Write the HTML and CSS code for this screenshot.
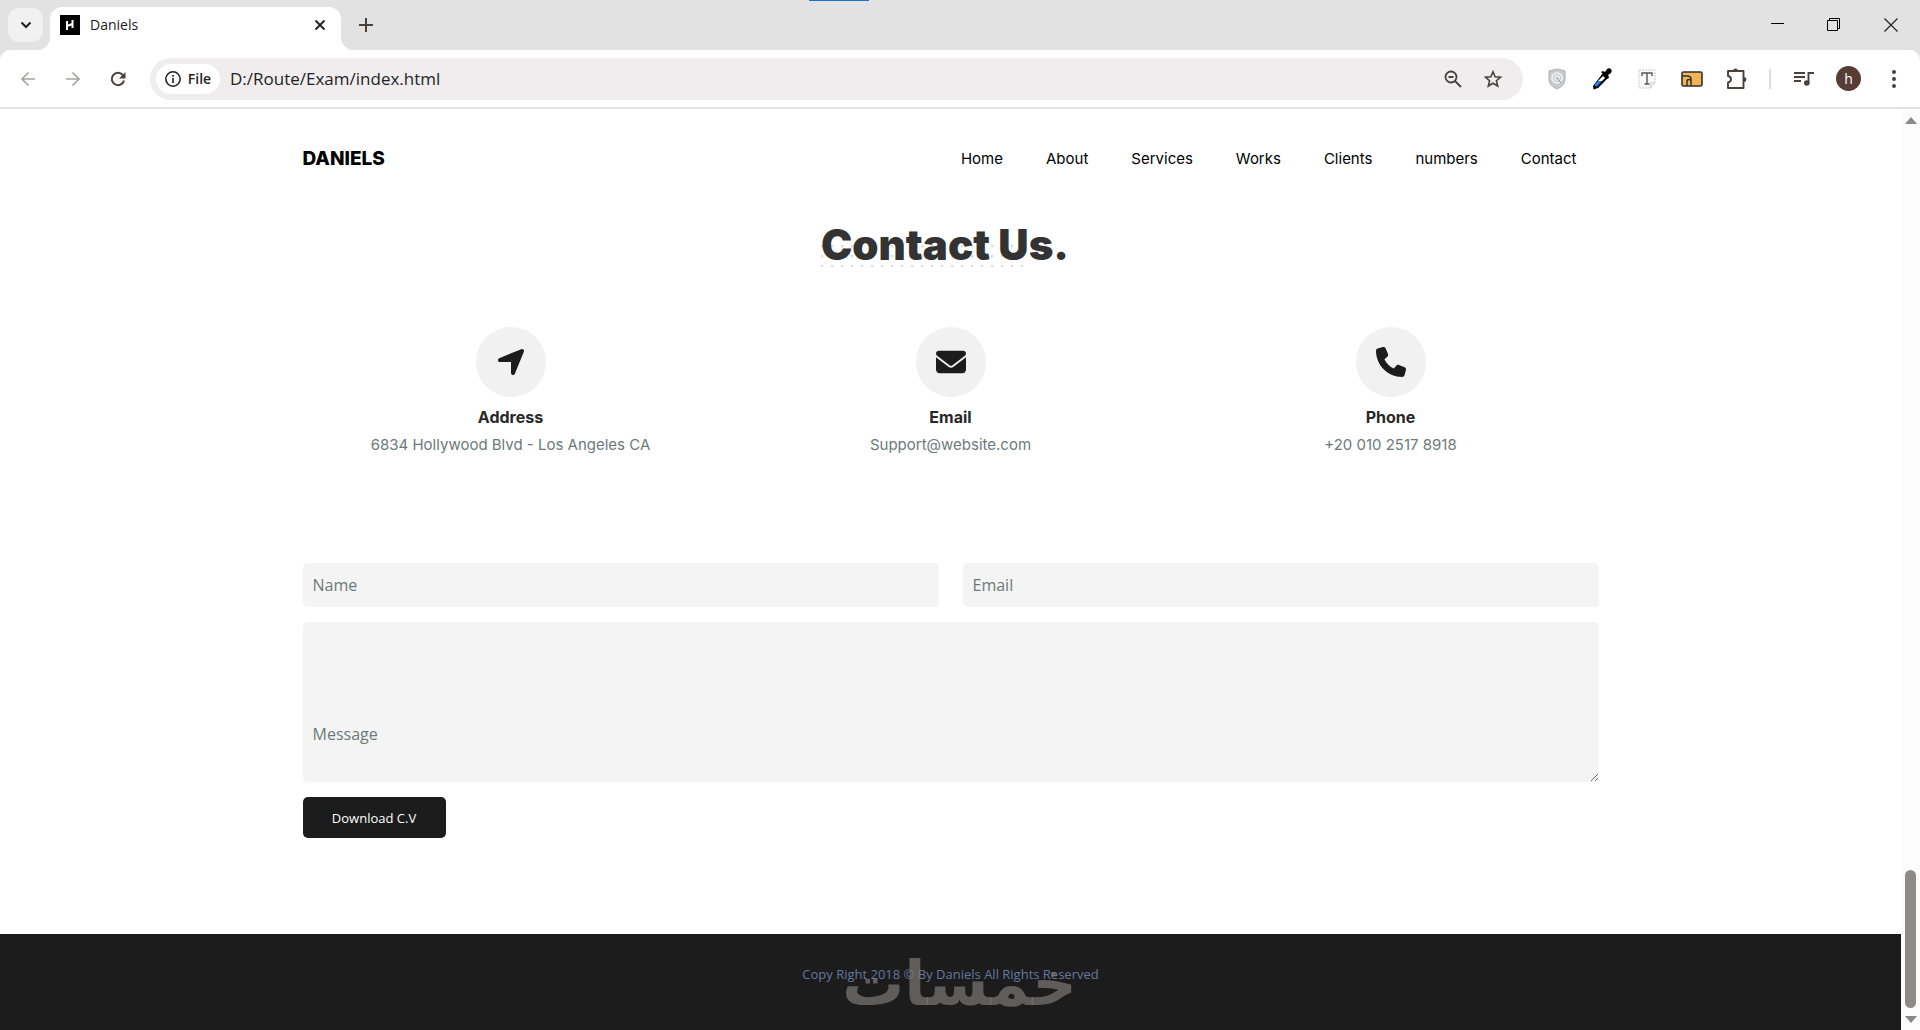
FILE: index.html
```html
<!DOCTYPE html>
<html lang="en">
<head>
    <meta charset="UTF-8">
    <meta name="viewport" content="width=device-width, initial-scale=1.0">
    <title>Daniels</title>
    <link rel="stylesheet" href="styles.css">
</head>
<body>

    <div class="browser">
        <!-- tab strip -->
        <div class="tab-strip">
            <button class="tab-search" aria-label="Search tabs">
                <svg width="12" height="8" viewBox="0 0 12 8"><path d="M1.500 1.500 6 6l4.500-4.500" fill="none" stroke="#1f1f1f" stroke-width="2"/></svg>
            </button>
            <div class="tab">
                <svg class="favicon" width="20" height="20" viewBox="0 0 20 20"><rect width="20" height="20"/><path d="M7 6v9M12.500 5v8M7 11l5.500-2" fill="none" stroke="#fff" stroke-width="2"/></svg>
                <span class="tab-title">Daniels</span>
                <button class="icon-btn tab-close" aria-label="Close tab">
                    <svg width="12" height="12" viewBox="0 0 12 12"><path d="M1.500 1.500l9 9M10.500 1.500l-9 9" stroke="#1f1f1f" stroke-width="1.800"/></svg>
                </button>
            </div>
            <button class="icon-btn new-tab" aria-label="New tab">
                <svg width="14" height="14" viewBox="0 0 14 14"><path d="M7 0v14M0 7h14" stroke="#4a413b" stroke-width="2"/></svg>
            </button>
            <div class="window-buttons">
                <button class="icon-btn" aria-label="Minimize">
                    <svg width="14" height="14" viewBox="0 0 14 14"><path d="M1 5.500h13" stroke="#000"/></svg>
                </button>
                <button class="icon-btn" aria-label="Restore">
                    <svg width="14" height="14" viewBox="0 0 14 14"><path d="M.5 2.500h10v10H.5zM2.500 2V.5h10v10H11" fill="none" stroke="#000"/></svg>
                </button>
                <button class="icon-btn" aria-label="Close">
                    <svg width="14" height="14" viewBox="0 0 14 14"><path d="M.5.5l13 13M13.500.5l-13 13" stroke="#222" stroke-width="1.200"/></svg>
                </button>
            </div>
        </div>

        <!-- toolbar -->
        <div class="toolbar">
            <div class="nav-buttons">
                <button class="icon-btn" aria-label="Back">
                    <svg width="16" height="16" viewBox="0 0 16 16"><path d="M15 8H2M8.500 1.500 2 8l6.500 6.500" fill="none" stroke="#a8a5a3" stroke-width="1.700"/></svg>
                </button>
                <button class="icon-btn" aria-label="Forward">
                    <svg width="16" height="16" viewBox="0 0 16 16"><path d="M1 8h13M7.500 1.500 14 8l-6.500 6.500" fill="none" stroke="#a8a5a3" stroke-width="1.700"/></svg>
                </button>
                <button class="icon-btn" aria-label="Reload">
                    <svg width="16" height="16" viewBox="0 0 16 16"><path d="M14 9.500A6.200 6.200 0 1 1 12.800 4L14.500 6" fill="none" stroke="#4a413b" stroke-width="2"/><path d="M15.500 1v6.500H9z" fill="#4a413b"/></svg>
                </button>
            </div>
            <div class="omnibox">
                <button class="site-chip">
                    <svg width="16" height="16" viewBox="0 0 16 16"><circle cx="8" cy="8" r="7.200" fill="none" stroke="#1f1f1f" stroke-width="1.500"/><path d="M8 7v5M8 4v1.800" stroke="#1f1f1f" stroke-width="1.600"/></svg>
                    File
                </button>
                <input class="url" type="text" aria-label="Address bar" value="D:/Route/Exam/index.html">
                <button class="icon-btn" aria-label="Zoom">
                    <svg width="18" height="18" viewBox="0 0 18 18"><circle cx="7" cy="7" r="5.500" fill="none" stroke="#4a413b" stroke-width="1.800"/><path d="M4.500 7h5M11 11l6 6" stroke="#4a413b" stroke-width="1.800"/></svg>
                </button>
                <button class="icon-btn" aria-label="Bookmark">
                    <svg width="18" height="18" viewBox="0 0 18 18"><path d="M9 1.800l2.100 4.900 5.400.5-4.100 3.500 1.300 5.300L9 13.200 4.300 16l1.300-5.300-4.100-3.500 5.400-.5z" fill="none" stroke="#4a413b" stroke-width="1.600"/></svg>
                </button>
            </div>
            <div class="extensions">
                <button class="icon-btn" aria-label="Shield">
                    <svg width="18" height="22" viewBox="0 0 18 22"><path d="M9 1l8 2v8c0 5-3.500 8-8 10-4.500-2-8-5-8-10V3z" fill="#c8cbcd" stroke="#aaaeb0"/><circle cx="9" cy="10" r="5" fill="none" stroke="#f4f4f4" stroke-width="1.500"/><circle cx="9" cy="10" r="2.200" fill="none" stroke="#f4f4f4" stroke-width="1.200"/><path d="M9 10l4 5" stroke="#8e9396"/></svg>
                </button>
                <button class="icon-btn" aria-label="Color picker">
                    <svg width="20" height="22" viewBox="0 0 20 22"><path d="M11 5l5 5L6 20l-4.500 1.500L1 18z" fill="#000"/><path d="M11 8l2 2-3 3H6z" fill="#fff"/><path d="M6 13h4l-5 5.500H3V16z" fill="#2f7ee0"/><path d="M9 4l2-1 2 1 2-3c3-2 6 1 4 4l-3 2 1 2-1 2z" fill="#000"/></svg>
                </button>
                <button class="icon-btn" aria-label="Text tool">
                    <svg width="18" height="20" viewBox="0 0 18 20"><path d="M1 1h16v13l-4 5H1z" fill="#fafafa" stroke="#c9c9c9" stroke-dasharray="2 1"/><path d="M4 7V4h10v3M9 4v11M6.500 15h5" fill="none" stroke="#555" stroke-width="1.400"/><path d="M17 14h-4v5" fill="none" stroke="#c9c9c9"/></svg>
                </button>
                <button class="icon-btn" aria-label="Folder tool">
                    <svg width="22" height="16" viewBox="0 0 22 16"><rect x="1" y="1" width="20" height="14" rx="1.500" fill="#f3b457" stroke="#33302d" stroke-width="1.600"/><path d="M1 5h5c3 0 4 1 4 3v7M6 15v-5c0-2 4-2 4 0" fill="none" stroke="#33302d" stroke-width="1.500"/></svg>
                </button>
                <button class="icon-btn" aria-label="Extensions">
                    <svg width="22" height="22" viewBox="0 0 22 22"><path d="M2 3h15.500v17H2v-5.500c4-1 4-5.500 0-6.500z" fill="none" stroke="#4a413b" stroke-width="1.900" stroke-linejoin="round"/><path d="M7 3a2.500 2.500 0 0 1 5 0zM18 9a2.500 2.500 0 0 1 0 5z" fill="#4a413b"/></svg>
                </button>
                <span class="divider"></span>
                <button class="icon-btn" aria-label="Media control">
                    <svg width="20" height="16" viewBox="0 0 20 16"><path d="M0 2h11M0 6h11M0 10h7M14.500 12V2H20" fill="none" stroke="#4a413b" stroke-width="1.900"/><circle cx="12.800" cy="12" r="2.800" fill="#4a413b"/></svg>
                </button>
                <button class="avatar" aria-label="Profile">h</button>
                <button class="icon-btn" aria-label="Menu">
                    <svg width="4" height="18" viewBox="0 0 4 18"><g fill="#4a413b"><circle cx="2" cy="2" r="2"/><circle cx="2" cy="9" r="2"/><circle cx="2" cy="16" r="2"/></g></svg>
                </button>
            </div>
        </div>
    </div>

    <div class="viewport">
        <div class="page">
            <header class="container navbar">
                <a class="brand" href="#home">DANIELS</a>
                <nav>
                    <ul class="nav-list">
                        <li><a href="#home">Home</a></li>
                        <li><a href="#about">About</a></li>
                        <li><a href="#services">Services</a></li>
                        <li><a href="#works">Works</a></li>
                        <li><a href="#clients">Clients</a></li>
                        <li><a href="#numbers">numbers</a></li>
                        <li><a href="#contact">Contact</a></li>
                    </ul>
                </nav>
            </header>

            <main class="container contact" id="contact">
                <h1 class="title"><span>Contact Us.</span></h1>

                <div class="info-list">
                    <div class="info">
                        <div class="info-icon">
                            <svg width="28" height="32" viewBox="0 0 448 512"><path d="M429.600 92.100c4.900-11.900 2.100-25.600-7-34.700s-22.800-11.900-34.700-7l-352 144c-14.200 5.800-22.200 20.800-19.300 35.800S32.600 256 48 256H224V432c0 15.300 10.800 28.400 25.800 31.400s30-5.100 35.800-19.300z" fill="#1c1c1c"/></svg>
                        </div>
                        <h2>Address</h2>
                        <p>6834 Hollywood Blvd - Los Angeles CA</p>
                    </div>
                    <div class="info">
                        <div class="info-icon">
                            <svg width="30" height="30" viewBox="0 0 512 512"><path d="M48 64C21.500 64 0 85.500 0 112c0 15.100 7.100 29.300 19.200 38.400l217.600 163.200c11.400 8.500 27 8.500 38.400 0l217.600-163.200c12.100-9.100 19.200-23.300 19.200-38.400 0-26.500-21.500-48-48-48zM0 176v208c0 35.300 28.700 64 64 64h384c35.300 0 64-28.700 64-64V176L294.400 339.200c-22.800 17.100-54 17.100-76.800 0z" fill="#1c1c1c"/></svg>
                        </div>
                        <h2>Email</h2>
                        <p>Support@website.com</p>
                    </div>
                    <div class="info">
                        <div class="info-icon">
                            <svg width="30" height="30" viewBox="0 0 512 512"><path d="M164.900 24.600c-7.700-18.600-28-28.500-47.400-23.200l-88 24C12.100 30.200 0 46 0 64c0 247.400 200.600 448 448 448 18 0 33.800-12.100 38.600-29.500l24-88c5.300-19.400-4.600-39.700-23.200-47.400l-96-40c-16.300-6.800-35.200-2.100-46.300 11.600L304.700 368C234.300 334.700 177.300 277.700 144 207.300l49.300-40.300c13.700-11.200 18.400-30 11.600-46.300z" fill="#1c1c1c"/></svg>
                        </div>
                        <h2>Phone</h2>
                        <p>+20 010 2517 8918</p>
                    </div>
                </div>

                <form class="contact-form">
                    <input type="text" placeholder="Name" aria-label="Name">
                    <input type="email" placeholder="Email" aria-label="Email">
                    <textarea placeholder="Message" aria-label="Message"></textarea>
                    <button type="button">Download C.V</button>
                </form>
            </main>

            <footer class="footer">
                <p>Copy Right 2018 © By Daniels All Rights Reserved</p>
                <span class="watermark" lang="ar" dir="rtl">خمسات</span>
            </footer>
        </div>

        <div class="scrollbar" aria-hidden="true">
            <span class="arrow-up"></span>
            <span class="thumb"></span>
            <span class="arrow-down"></span>
        </div>
    </div>

</body>
</html>
```
FILE: styles.css
```css
* {
    box-sizing: border-box;
}

body {
    margin: 0;
    min-height: 100vh;
    display: flex;
    flex-direction: column;
    font-family: "Open Sans", sans-serif;
    background-color: #fff;
    color: #1c1c1c;
}

button {
    border: none;
    padding: 0;
    background: none;
    font-family: inherit;
    cursor: pointer;
}

svg {
    display: block;
}

h1, h2, p, ul {
    margin: 0;
    padding: 0;
}

a {
    color: inherit;
    text-decoration: none;
}

/* browser window */
.browser {
    background-color: #e2e2e2;
    border-bottom: 2px solid #e0e0e0;
}

.browser::before {
    content: "";
    position: absolute;
    top: 0;
    left: 809px;
    width: 60px;
    height: 1px;
    background-color: #1a73c8;
}

.tab-strip {
    height: 50px;
    display: flex;
    align-items: center;
    padding-left: 8px;
}

.icon-btn {
    display: flex;
    align-items: center;
    justify-content: center;
}

.tab-search {
    width: 35px;
    height: 34px;
    display: flex;
    align-items: center;
    justify-content: center;
    border-radius: 11px;
    background-color: #f1f1f1;
}

.tab {
    position: relative;
    align-self: flex-end;
    width: 291px;
    height: 43px;
    margin-left: 7px;
    padding: 0 15px 8px 10px;
    display: flex;
    align-items: center;
    gap: 10px;
    border-radius: 12px 12px 0 0;
    background-color: #fff;
}

.tab::before,
.tab::after {
    content: "";
    position: absolute;
    bottom: 0;
    width: 14px;
    height: 14px;
    pointer-events: none;
}

.tab::before {
    right: 100%;
    background: radial-gradient(circle at 0 0, transparent 14px, #fff 15px);
}

.tab::after {
    left: 100%;
    background: radial-gradient(circle at 100% 0, transparent 14px, #fff 15px);
}

.tab-title {
    flex: 1;
    font-size: 14px;
}

.new-tab {
    margin-left: 18px;
}

.window-buttons {
    margin-left: auto;
    padding-right: 22px;
    display: flex;
    gap: 43px;
}

.toolbar {
    height: 57px;
    padding: 0 14px 0 20px;
    display: flex;
    align-items: center;
    border-radius: 10px 10px 0 0;
    background-color: #fff;
}

.nav-buttons {
    display: flex;
    gap: 29px;
}

.omnibox {
    flex: 1;
    height: 42px;
    margin-left: 24px;
    padding: 0 21px 0 6px;
    display: flex;
    align-items: center;
    gap: 22px;
    border-radius: 21px;
    background-color: #efedee;
}

.site-chip {
    width: 64px;
    height: 30px;
    display: flex;
    align-items: center;
    justify-content: center;
    gap: 7px;
    border-radius: 15px;
    background-color: #fff;
    color: #1f1f1f;
    font-size: 14px;
    font-weight: 600;
}

.url {
    flex: 1;
    min-width: 0;
    margin-left: -12px;
    padding: 0;
    border: none;
    outline: none;
    background: none;
    color: #1f1f1f;
    font-family: inherit;
    font-size: 17px;
}

.extensions {
    display: flex;
    align-items: center;
    gap: 20px;
    padding-left: 21px;
}

.extensions .icon-btn {
    width: 25px;
}

.divider {
    width: 2px;
    height: 20px;
    background-color: #dedcdc;
}

.avatar {
    width: 25px;
    height: 25px;
    border-radius: 50%;
    background-color: #583d36;
    color: #fff;
    font-size: 14px;
}

/* page */
.viewport {
    flex: 1;
    display: flex;
}

.page {
    flex: 1;
    display: flex;
    flex-direction: column;
}

.container {
    width: 100%;
    max-width: 1296px;
    margin: 0 auto;
}

.navbar {
    height: 99px;
    display: flex;
    align-items: center;
    justify-content: space-between;
    padding-right: 22px;
}

.brand {
    color: #000;
    font-family: Inter, sans-serif;
    font-size: 19px;
    font-weight: 800;
}

.nav-list {
    display: flex;
    gap: 43px;
    list-style: none;
    color: #000;
    font-family: Inter, sans-serif;
    font-size: 15px;
}

.contact {
    flex: 1;
}

.title {
    padding: 9px 11px 0 0;
    color: #333;
    font-family: Inter, sans-serif;
    font-size: 42px;
    font-weight: 900;
    line-height: 56px;
    text-align: center;
}

.title span {
    position: relative;
    z-index: 0;
    display: inline-block;
}

/* dotted pattern behind the heading */
.title span::before {
    content: "";
    position: absolute;
    z-index: -1;
    left: 0;
    bottom: 6px;
    width: 82%;
    height: 22px;
    background: radial-gradient(circle at 1px 1px, #ddd 1px, transparent 2px) 0 0 / 10px 10px;
}

.info-list {
    display: grid;
    grid-template-columns: repeat(3, 1fr);
    column-gap: 24px;
    margin-top: 54px;
    text-align: center;
}

.info-icon {
    width: 70px;
    height: 70px;
    margin: 0 auto 8px;
    display: flex;
    align-items: center;
    justify-content: center;
    border-radius: 50%;
    background-color: #f1f1f1;
}

.info h2 {
    color: #282828;
    font-family: Inter, sans-serif;
    font-size: 16px;
    font-weight: 700;
    line-height: 24px;
}

.info p {
    margin-top: 4px;
    color: #6c7a7a;
    font-family: Inter, sans-serif;
    font-size: 15px;
    line-height: 24px;
}

.contact-form {
    display: grid;
    grid-template-columns: 1fr 1fr;
    gap: 15px 24px;
    margin-top: 106px;
}

.contact-form input,
.contact-form textarea {
    width: 100%;
    height: 44px;
    padding: 0 10px;
    border: none;
    border-radius: 5px;
    background-color: #f4f4f4;
    font-family: inherit;
    font-size: 16px;
}

.contact-form textarea {
    grid-column: 1 / -1;
    height: 160px;
    padding-top: 101px;
    display: block;
}

.contact-form ::placeholder {
    color: #6c7a7a;
    opacity: 1;
}

.contact-form button {
    width: 143px;
    height: 41px;
    border-radius: 5px;
    background-color: #1c1c1c;
    color: #fff;
    font-size: 13px;
}

.footer {
    position: relative;
    height: 96px;
    padding-top: 30px;
    background-color: #1c1c1c;
    color: #65789f;
    font-size: 13px;
    line-height: 20px;
    text-align: center;
}

.watermark {
    position: absolute;
    top: 20px;
    left: 0;
    right: 0;
    padding-left: 18px;
    color: rgba(125, 120, 117, 0.7);
    font-family: "DejaVu Sans", sans-serif;
    font-size: 62px;
    font-weight: 700;
    line-height: 60px;
    pointer-events: none;
}

/* scrollbar */
.scrollbar {
    width: 19px;
    padding: 8px 0 7px;
    display: flex;
    flex-direction: column;
    align-items: center;
    background-color: #fcfcfc;
}

.arrow-up,
.arrow-down {
    border: 6px solid transparent;
}

.arrow-up {
    border-top: none;
    border-bottom: 7px solid #8a8888;
}

.arrow-down {
    border-bottom: none;
    border-top: 7px solid #8a8888;
}

.thumb {
    width: 11px;
    height: 138px;
    margin: auto 0 8px;
    border-radius: 6px;
    background-color: #8e8a89;
}
```
